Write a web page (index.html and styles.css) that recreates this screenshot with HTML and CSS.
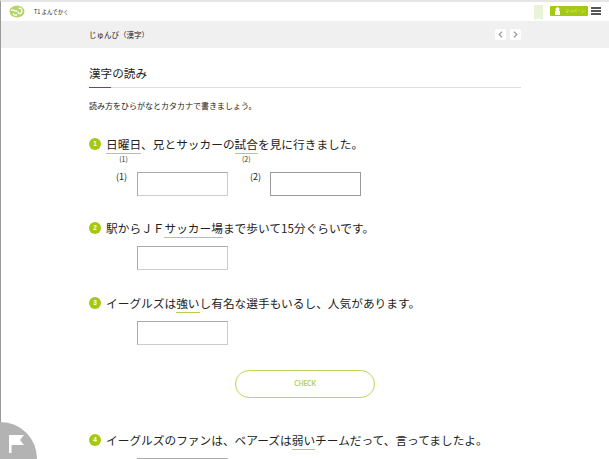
FILE: index.html
```html
<!DOCTYPE html>
<html lang="ja">
<head>
<meta charset="utf-8">
<title>漢字の読み</title>
<link rel="stylesheet" href="styles.css">
</head>
<body>
<div id="page">
	<div id="header">
		<svg class="logo" width="16" height="13" viewBox="0 0 16 13">
			<ellipse cx="8" cy="6.500" rx="7.500" ry="6" fill="#b5d56a"/>
			<path d="M2.500 5.500C4.500 3 6 8 8 5.500M9.500 3.500C12 2.500 13.500 5 12.500 7.500 11 9.500 9 8.500 9 6.500M4 8.500C5 10.500 7 10.500 8 9.500" fill="none" stroke="#fff" stroke-width="1.300"/>
		</svg>
		<span class="appname">T1 よんでかく</span>
		<span class="bookmark"></span>
		<span class="mypage">
			<svg width="7" height="8" viewBox="0 0 7 8"><circle cx="3.500" cy="2.200" r="2" fill="#fff"/><rect x="1" y="4" width="5" height="4" fill="#fff"/></svg>
			<span>マイページ</span>
		</span>
		<span class="menu"><i></i><i></i><i></i></span>
	</div>
	<div id="subbar">
		<span class="subtitle">じゅんび（漢字）</span>
		<span class="pager">
			<span class="pagebtn"><svg width="5" height="7" viewBox="0 0 5 7"><path d="M4 .8 1.200 3.500 4 6.200" fill="none" stroke="#999" stroke-width="1.200"/></svg></span>
			<span class="pagebtn"><svg width="5" height="7" viewBox="0 0 5 7"><path d="M1 .8 3.800 3.500 1 6.200" fill="none" stroke="#999" stroke-width="1.200"/></svg></span>
		</span>
	</div>
	<div id="content">
		<h1 class="title">漢字の読み</h1>
		<p class="lead">読み方をひらがなとカタカナで書きましょう。</p>

		<div class="q q1">
			<p class="qtext"><span class="num">1</span><span class="mark">日曜日<small>(1)</small></span>、兄とサッカーの<span class="mark">試合<small>(2)</small></span>を見に行きました。</p>
			<div class="answers">
				<div class="answer"><span class="alabel">(1)</span><span class="box"></span></div>
				<div class="answer"><span class="alabel">(2)</span><span class="box dark"></span></div>
			</div>
		</div>

		<div class="q q2">
			<p class="qtext"><span class="num">2</span>駅からＪＦ<span class="mark">サッカー場</span>まで歩いて15分ぐらいです。</p>
			<div class="answers"><div class="answer"><span class="alabel"></span><span class="box"></span></div></div>
		</div>

		<div class="q q3">
			<p class="qtext"><span class="num">3</span>イーグルズは<span class="mark">強い</span>し有名な選手もいるし、人気があります。</p>
			<div class="answers"><div class="answer"><span class="alabel"></span><span class="box"></span></div></div>
		</div>

		<div class="checkrow"><span class="check">CHECK</span></div>

		<div class="q q4">
			<p class="qtext"><span class="num">4</span>イーグルズのファンは、ベアーズは<span class="mark">弱い</span>チームだって、言ってましたよ。</p>
			<div class="answers"><div class="answer"><span class="alabel"></span><span class="box"></span></div></div>
		</div>
	</div>
</div>
<div class="flag">
	<svg width="15" height="18" viewBox="0 0 15 18"><path d="M0 0H15L11 5 15 10H2.500V18H0Z" fill="#fff"/></svg>
</div>
</body>
</html>
```
FILE: styles.css
```css
html,body{margin:0; padding:0; height:459px; overflow:hidden; background:#fff}
body{font-family:"Noto Sans CJK JP","Noto Sans",sans-serif; color:#222}
#page{height:459px; overflow:hidden; border-left:1px solid #999; border-top:2px solid #e6e6e6; box-sizing:border-box}

#header{height:19px; display:flex; align-items:center; padding:0 8px 0 8px}
.logo{display:block; margin-top:-1px}
.appname{font-size:5.5px; margin-left:9px; flex:1}
.bookmark{width:9px; height:15px; background:#e8f3d8; margin-right:7px; margin-top:2px; clip-path:polygon(0 0,100% 0,100% 100%,50% 88%,0 100%)}
.mypage{width:38px; height:10px; background:#a5c812; border-radius:1px; display:flex; align-items:center; gap:4px; padding-left:4px; box-sizing:border-box; color:#e6f2b8; font-size:4px; margin-top:-1px}
.menu{width:10px; margin-left:3px; margin-top:-1px; display:flex; flex-direction:column; gap:1px}
.menu i{display:block; height:2px; background:#555}

#subbar{height:27px; background:#f0f0f0; display:flex; align-items:center; padding:0 88px 0 88px; justify-content:space-between}
.subtitle{font-size:7.5px}
.pager{display:flex; gap:4px}
.pagebtn{width:11px; height:11px; background:#fff; border-radius:2px; display:flex; align-items:center; justify-content:center}

#content{margin:0 88px; width:432px}
.title{font-size:11.6px; font-weight:normal; margin:0; padding-top:17px; height:22px; line-height:16px; border-bottom:1px solid #ddd; position:relative}
.title:after{content:""; position:absolute; left:0; bottom:-1px; width:22px; height:1px; background:#6a3f91}
.lead{font-size:8px; line-height:12px; margin:12px 0 0}

.q{margin:0}
.q1{margin-top:24px}
.q2{margin-top:24px}
.q3{margin-top:25px}
.q4{margin-top:34px}
.qtext{font-size:11.7px; line-height:16px; margin:0; display:flex; align-items:center}
.num{width:12px; height:12px; border-radius:50%; background:#a5c812; color:#fff; font-size:6.5px; line-height:12px; text-align:center; margin-right:5px; font-family:"Liberation Sans",sans-serif; font-weight:bold}
.mark{position:relative; height:16px; border-bottom:1px solid #b5d14f; line-height:16px; padding-bottom:1px; margin-bottom:-2px}
.mark small{position:absolute; left:50%; top:19px; transform:translateX(-50%); font-size:7px; line-height:8px; color:#333}

.answers{display:flex; gap:22px; margin-top:10px}
.answer{display:flex; gap:14px}
.alabel{width:34px; margin-right:-14px; padding-left:27px; box-sizing:border-box; font-size:9px; line-height:11px; margin-top:-1px}
.answer + .answer .alabel{width:20px; padding-left:0}
.box{width:91px; height:24px; box-sizing:border-box; border:1px solid #aaa; border-right-color:#ccc; border-bottom-color:#ccc; display:block; margin-left:14px}
.answer + .answer .box{margin-left:0}
.box.dark{border-color:#999}

.q1 .answers{margin-top:20px}
.checkrow{display:flex; justify-content:center; margin-top:25px}
.check{width:140px; height:28px; box-sizing:border-box; border:1px solid #bcd85f; border-radius:14px; color:#a9cf5f; font-size:6.5px; line-height:26px; text-align:center; font-family:"Lato",sans-serif; font-weight:bold}

.flag{position:fixed; left:-36px; bottom:-36px; width:73px; height:73px; background:#b3b3b3; border-radius:50%}
.flag svg{position:absolute; left:45px; top:13px}
```
